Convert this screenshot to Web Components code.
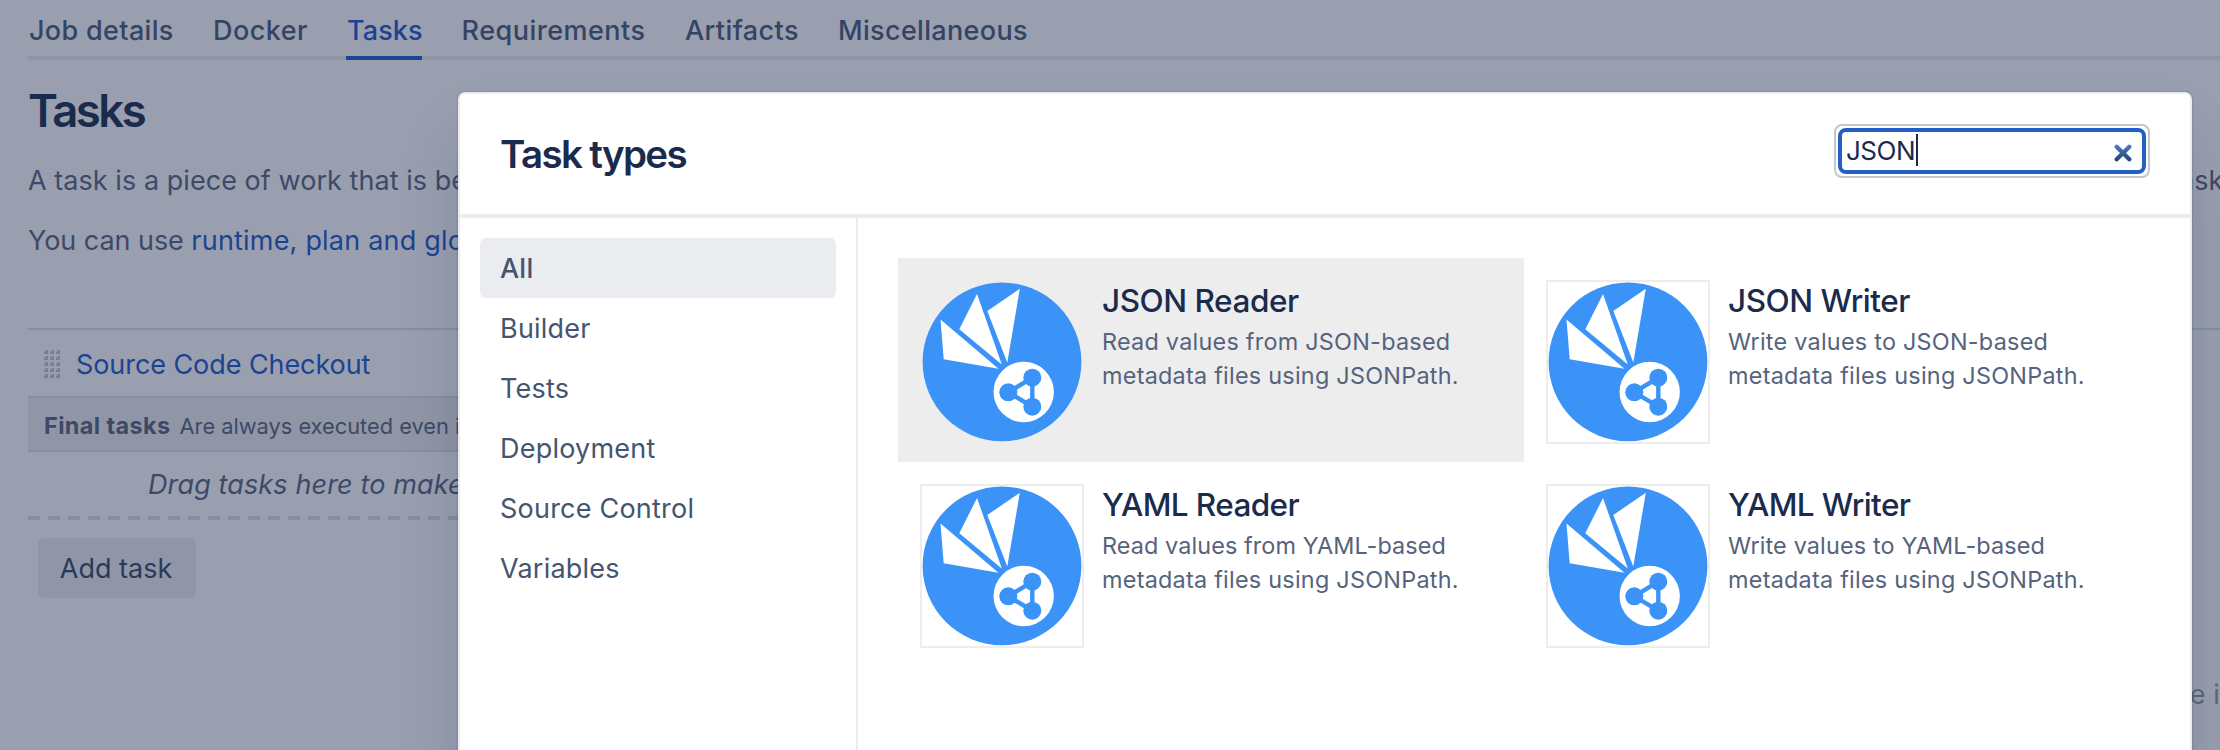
<!DOCTYPE html>
<html lang="en">
<head>
<meta charset="utf-8">
<title>Task types</title>
<style>
  html, body { margin: 0; height: 750px; width: 2220px; overflow: hidden; }
  body { font-family: Inter, "Liberation Sans", sans-serif; background: #999faf; }
</style>
</head>
<body>
<task-page></task-page>

<script>
const define = (name, html) => {
  const template = document.createElement('template');
  template.innerHTML = html;
  customElements.define(name, class extends HTMLElement {
    constructor() {
      super();
      this.attachShadow({ mode: 'open' }).append(template.content.cloneNode(true));
    }
  });
};

define('nav-tab', `
<style>
  :host { display: block; box-sizing: border-box; height: 60px; padding: 0 1px; font-size: 27px; font-weight: 500;
          line-height: 61px; color: #344462; white-space: nowrap; }
  :host([active]) { color: #1c4391; border-bottom: 4px solid #1c4694; }
</style><slot></slot>`);

define('nav-tabs', `
<style>
  :host { display: flex; height: 60px; box-shadow: inset 0 -4px #9094a5; margin-right: -28px; }
</style><slot></slot>`);

define('drag-handle', `
<style>:host { display: block; width: 16px; height: 28px; } svg { display: block; }</style>
<svg width="16" height="28" viewBox="0 0 16 28">
  <defs><pattern id="p" width="6" height="6" patternUnits="userSpaceOnUse">
    <path d="M0 2H2V0H4V4H0Z" fill="#777e91"/><path d="M0 0H2V2H0Z" fill="#8b92a4"/>
  </pattern></defs>
  <rect width="16" height="28" fill="url(#p)"/>
</svg>`);

define('task-list', `
<style>
  :host { display: block; width: 800px; color: #3d4a67; white-space: nowrap; }
  .row { display: flex; align-items: center; box-sizing: border-box; height: 68px; padding: 2px 0 0 16px; gap: 16px;
         border-top: 2px solid #858fa0; font-size: 27px; color: #1c4391; letter-spacing: -.07px; }
  .final { box-sizing: border-box; height: 56px; padding-left: 16px; background: #9096a6;
           border: solid #858fa0; border-width: 2px 0; font-size: 21.8px; line-height: 55px; }
  b { font-size: 23.4px; letter-spacing: .4px; margin-right: 9px; }
  .drop { height: 64px; padding-left: 120px; line-height: 65px; font-size: 27px; font-style: italic; letter-spacing: .13px; }
  .dash { height: 4px; background: repeating-linear-gradient(90deg, #858fa0 0 12px, transparent 12px 20px); }
  button { display: block; margin: 18px 0 0 10px; width: 158px; height: 60px; padding: 0 2px 0 0; border: 0; border-radius: 6px;
           background: #9095a8; font: 27px Inter, sans-serif; color: #293a59; }
</style>
<div class="row"><drag-handle></drag-handle><span>Source Code Checkout</span></div>
<div class="final"><b>Final tasks</b>Are always executed even if</div>
<div class="drop">Drag tasks here to make</div>
<div class="dash"></div>
<button>Add task</button>`);

define('brand-logo', `
<style>
  :host { display: block; box-sizing: border-box; width: 164px; height: 164px; border: 2px solid #ededed; }
  svg { display: block; }
</style>
<svg width="160" height="160" viewBox="0 0 160 160">
  <circle cx="80" cy="79.8" r="79.4" fill="#3b93f7"/>
  <g fill="#fff">
    <path d="M18.5 37.5 21.7 77.3 76.5 86.7Z"/>
    <path d="M55 12 37.3 47.3 79.8 82.5Z"/>
    <path d="M97.8 6.8 65.3 29 85.3 80.5Z"/>
    <circle cx="101.7" cy="110" r="30.2"/>
  </g>
  <path d="M110.3 124.7V95.7L86.3 110.3Z" fill="none" stroke="#3b93f7" stroke-width="4.4"/>
  <g fill="#3b93f7">
    <circle cx="86.3" cy="110.3" r="9"/><circle cx="110.3" cy="95.7" r="9"/><circle cx="110.3" cy="124.7" r="9"/>
  </g>
</svg>`);

define('task-card', `
<style>
  :host { display: flex; box-sizing: border-box; width: 626px; height: 204px; padding: 22px 22px 18px; gap: 18px; }
  :host([selected]) { background: #ededed; }
  .text { display: flex; flex-direction: column; white-space: nowrap; padding-top: 1px; }
  .title { font-size: 31.5px; font-weight: 550; line-height: 40px; letter-spacing: var(--track, -.45px); color: #1a2b4d; }
  .desc { font-size: 23.4px; line-height: 34px; letter-spacing: .25px; color: #56637d; margin-top: 4px; }
</style>
<brand-logo></brand-logo>
<div class="text"><div class="title"><slot name="title"></slot></div><div class="desc"><slot></slot></div></div>`);

define('side-item', `
<style>
  :host { display: block; height: 60px; padding-left: 20px; border-radius: 6px; font-size: 27px; line-height: 61px;
          letter-spacing: .22px; color: #45546f; }
  :host([selected]) { background: #ebecf0; font-weight: 500; }
</style><slot></slot>`);

define('search-field', `
<style>
  :host { display: flex; box-sizing: border-box; width: 316px; height: 54px; padding: 2px; border: 2px solid #c3c7d1; border-radius: 8px; background: #fff; }
  .ring { flex: 1; display: flex; align-items: center; padding: 0 10px 0 4px; border: 4px solid #2260c8; border-radius: 8px; }
  .value { font-size: 26px; letter-spacing: -.5px; color: #1a2b4d; line-height: 38px; margin-right: 1px; }
  .caret { width: 2px; height: 32px; background: #1a2b4d; margin: -2px auto 0 0; }
  svg { display: block; margin-top: 4px; }
</style>
<div class="ring"><span class="value">JSON</span><span class="caret"></span>
  <svg width="18" height="18" viewBox="0 0 18 18">
    <defs><linearGradient id="g" x2="0" y2="18" gradientUnits="userSpaceOnUse"><stop stop-color="#4f7fc8"/><stop offset="1" stop-color="#223d70"/></linearGradient></defs>
    <path d="M2.7 2.7 15.3 15.3M15.3 2.7 2.7 15.3" stroke="url(#g)" stroke-width="4.3" stroke-linecap="round"/>
  </svg>
</div>`);

define('task-dialog', `
<style>
  :host { display: flex; flex-direction: column; box-sizing: border-box; width: 1734px; height: 740px; background: #fff;
          border: 2px solid #ebecf0; border-radius: 7px;
          box-shadow: 0 0 2px rgba(9,30,66,.35), 0 40px 64px -16px rgba(9,30,66,.26); }
  header { display: flex; justify-content: space-between; box-sizing: border-box; height: 124px; padding: 30px 40px 0;
           border-bottom: 4px solid #ebecf0; }
  h2 { margin: 0; font-size: 38.5px; font-weight: 600; line-height: 60px; letter-spacing: -1.65px; color: #1a2b4d; }
  main { flex: 1; display: flex; }
  nav { box-sizing: border-box; width: 398px; padding: 20px; border-right: 2px solid #ebecf0; }
  section { display: grid; grid-template-columns: 626px 626px; grid-auto-rows: 204px; align-content: start; padding: 40px; }
</style>
<header><h2>Task types</h2><search-field></search-field></header>
<main>
  <nav>
    <side-item selected>All</side-item>
    <side-item>Builder</side-item>
    <side-item>Tests</side-item>
    <side-item>Deployment</side-item>
    <side-item>Source Control</side-item>
    <side-item>Variables</side-item>
  </nav>
  <section>
    <task-card selected><span slot="title">JSON Reader</span>Read values from JSON-based<br>metadata files using JSONPath.</task-card>
    <task-card><span slot="title">JSON Writer</span>Write values to JSON-based<br>metadata files using JSONPath.</task-card>
    <task-card style="--track:-.6px"><span slot="title">YAML Reader</span><span style="letter-spacing:.1px">Read values from YAML-based</span><br>metadata files using JSONPath.</task-card>
    <task-card style="--track:-.6px"><span slot="title">YAML Writer</span><span style="letter-spacing:.15px">Write values to YAML-based</span><br>metadata files using JSONPath.</task-card>
  </section>
</main>`);

define('task-page', `
<style>
  :host { display: block; position: relative; box-sizing: border-box; width: 2220px; height: 750px; padding: 0 28px; overflow: hidden;
          background: #999faf; color: #3d4a67; font-size: 27px; }
  h1 { margin: 34px 0 0; font-size: 45.5px; font-weight: 600; line-height: 34px; letter-spacing: -2.5px; color: #1a2b4d; }
  p { display: flex; margin: 0; line-height: 60px; white-space: pre; letter-spacing: .05px; }
  .first { margin-top: 23px; }
  .first span { flex: none; }
  .first span:first-child { width: 2142px; }
  p:not(.first) span { letter-spacing: -.05px; }
  a { color: #1c4391; letter-spacing: .2px; }
  .body { display: flex; justify-content: space-between; margin-top: 57px; }
  .pane { flex: 1; box-sizing: border-box; height: 420px; margin-right: -36.5px; padding-top: 335px; border-top: 2px solid #858fa0;
          line-height: 60px; text-align: right; color: #5f6678; white-space: nowrap; }
  task-dialog { position: absolute; left: 458px; top: 92px; }
</style>
<nav-tabs>
  <nav-tab style="letter-spacing:.33px;width:144.5px;margin-right:39.5px">Job details</nav-tab>
  <nav-tab style="letter-spacing:.45px;width:94px;margin-right:40px">Docker</nav-tab>
  <nav-tab active style="letter-spacing:.1px;width:76px;margin-right:38.5px">Tasks</nav-tab>
  <nav-tab style="letter-spacing:.5px;width:184px;margin-right:39.5px">Requirements</nav-tab>
  <nav-tab style="letter-spacing:.4px;width:115px;margin-right:38px">Artifacts</nav-tab>
  <nav-tab style="letter-spacing:.33px">Miscellaneous</nav-tab>
</nav-tabs>
<h1>Tasks</h1>
<p class="first"><span>A task is a piece of work that is being</span><span>task</span></p>
<p><span>You can use </span><a>runtime, plan and global</a></p>
<div class="body">
  <task-list></task-list>
  <div class="pane">configure it</div>
</div>
<task-dialog></task-dialog>`);
</script>
</body>
</html>
